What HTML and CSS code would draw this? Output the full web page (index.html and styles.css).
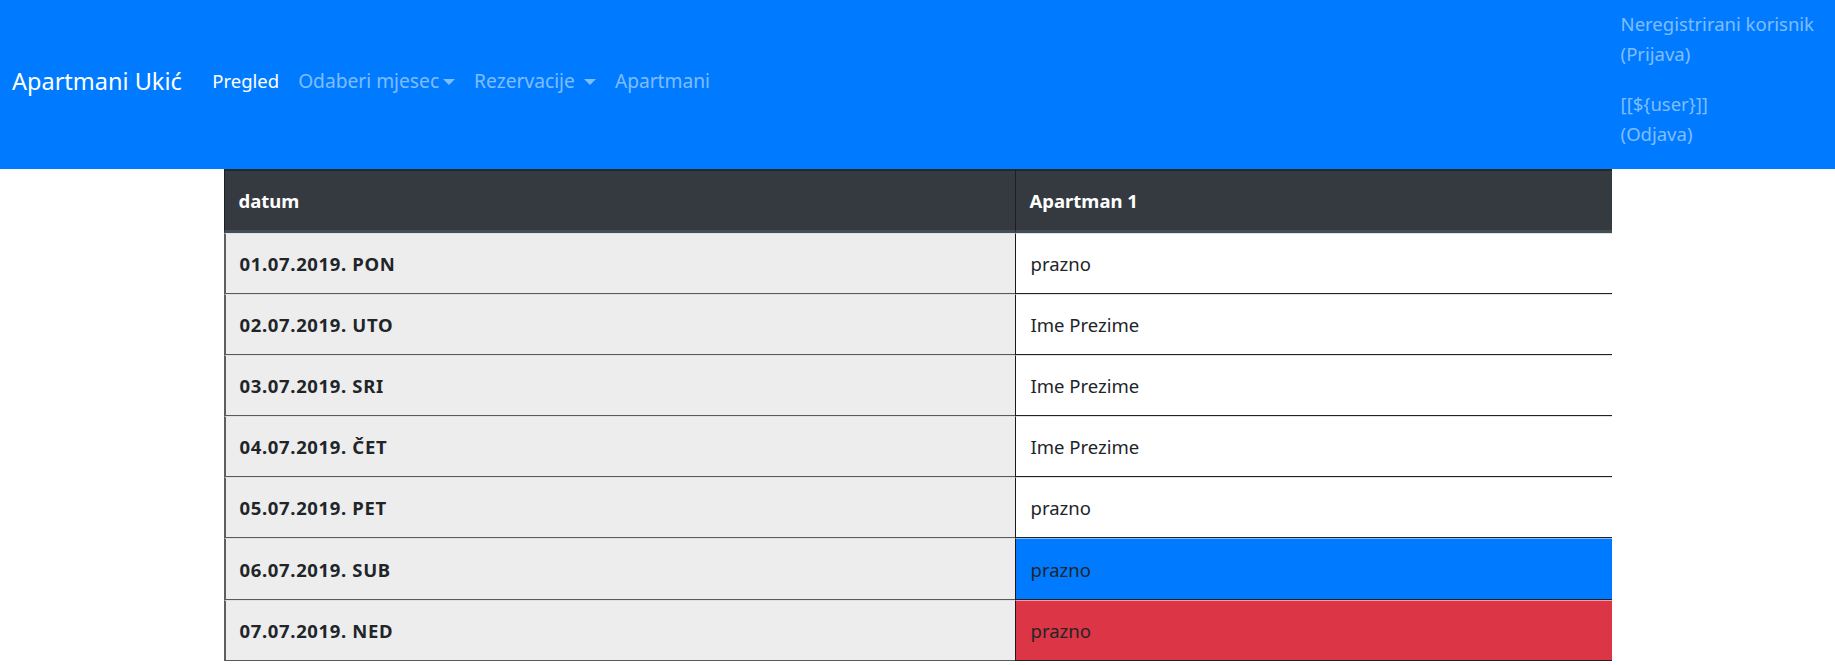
FILE: index.html
```html
<!DOCTYPE html>
<html lang="hr">
<head>
<meta charset="utf-8">
<title>Apartmani Ukić</title>
<link rel="stylesheet" href="styles.css">
</head>
<body>
<nav class="navbar">
  <a class="brand" href="#">Apartmani Ukić</a>
  <ul class="nav">
    <li><a class="nav-link active" href="#">Pregled</a></li>
    <li><a class="nav-link dropdown" href="#">Odaberi mjesec<span class="caret"></span></a></li>
    <li><a class="nav-link dropdown" href="#">Rezervacije <span class="caret"></span></a></li>
    <li><a class="nav-link" href="#">Apartmani</a></li>
  </ul>
  <div class="user">
    <div class="user-block">
      <div>Neregistrirani korisnik</div>
      <div>(Prijava)</div>
    </div>
    <div class="user-block">
      <div>[[${user}]]</div>
      <div>(Odjava)</div>
    </div>
  </div>
</nav>
<table class="grid">
  <thead>
    <tr><th class="c-date">datum</th><th class="c-apt">Apartman 1</th></tr>
  </thead>
  <tbody>
    <tr><td class="c-date">01.07.2019. PON</td><td class="c-apt">prazno</td></tr>
    <tr><td class="c-date">02.07.2019. UTO</td><td class="c-apt">Ime Prezime</td></tr>
    <tr><td class="c-date">03.07.2019. SRI</td><td class="c-apt">Ime Prezime</td></tr>
    <tr><td class="c-date">04.07.2019. ČET</td><td class="c-apt">Ime Prezime</td></tr>
    <tr><td class="c-date">05.07.2019. PET</td><td class="c-apt">prazno</td></tr>
    <tr><td class="c-date">06.07.2019. SUB</td><td class="c-apt blue">prazno</td></tr>
    <tr><td class="c-date">07.07.2019. NED</td><td class="c-apt red">prazno</td></tr>
  </tbody>
</table>
</body>
</html>
```
FILE: styles.css
```css
* { box-sizing: border-box; }
html, body { margin: 0; padding: 0; }
body {
  font-family: "Noto Sans", "Open Sans", sans-serif;
  font-size: 18.5px;
  color: #212529;
  background: #fff;
}
a { text-decoration: none; }

.navbar {
  display: flex;
  align-items: center;
  height: 169px;
  background: #007bff;
  padding: 0 21px 0 12px;
}
.brand {
  color: #fff;
  font-size: 23.5px;
  line-height: 30px;
  margin-right: 21px;
  margin-top: -7px;
}
.nav {
  display: flex;
  list-style: none;
  margin: -7px 0 0 0;
  padding: 0;
}
.nav-link {
  display: block;
  padding: 0 9.5px;
  font-size: 19.2px;
  line-height: 28px;
  color: rgba(255,255,255,.5);
}
.nav-link.active { color: #fff; font-size: 18.5px; }
.caret {
  display: inline-block;
  vertical-align: 3px;
  margin-left: 4px;
  border-top: 6.5px solid rgba(255,255,255,.5);
  border-left: 6px solid transparent;
  border-right: 6px solid transparent;
}
.user {
  margin-left: auto;
  align-self: flex-start;
  padding-top: 9px;
  color: rgba(255,255,255,.5);
  line-height: 29.5px;
  display: flex;
  flex-direction: column;
  gap: 21px;
}

.grid {
  width: 1388px;
  margin: 0 auto;
  border-collapse: separate;
  border-spacing: 0;
}
.grid th, .grid td {
  text-align: left;
  padding: 0 15px 0 14px;
  vertical-align: middle;
  font-weight: 700;
}
.grid th {
  background: #343a40;
  color: #fff;
  height: 64px;
  border-top: 2px solid #24282c;
  border-bottom: 3px solid #454d55;
  border-left: 1px solid #1d2023;
}
.grid th.c-date { width: 791px; }
.grid td {
  height: 61.1px;
  border-top: 1px solid #dee2e6;
  border-bottom: 1px solid #5a5a5a;
}
.grid td.c-date {
  background: #ededed;
  border-left: 2px solid #5f5f5f;
  letter-spacing: 0.65px;
}
.grid td.c-apt {
  font-weight: 400;
  background: #fff;
  border-left: 1px solid #1a1a1a;
  border-bottom-color: #222;
  padding-left: 15px;
}
.grid td.c-apt.blue { background: #007bff; border-top-color: #7fbdff; }
.grid td.c-apt.red { background: #dc3545; border-top-color: #eea0a8; }
```
